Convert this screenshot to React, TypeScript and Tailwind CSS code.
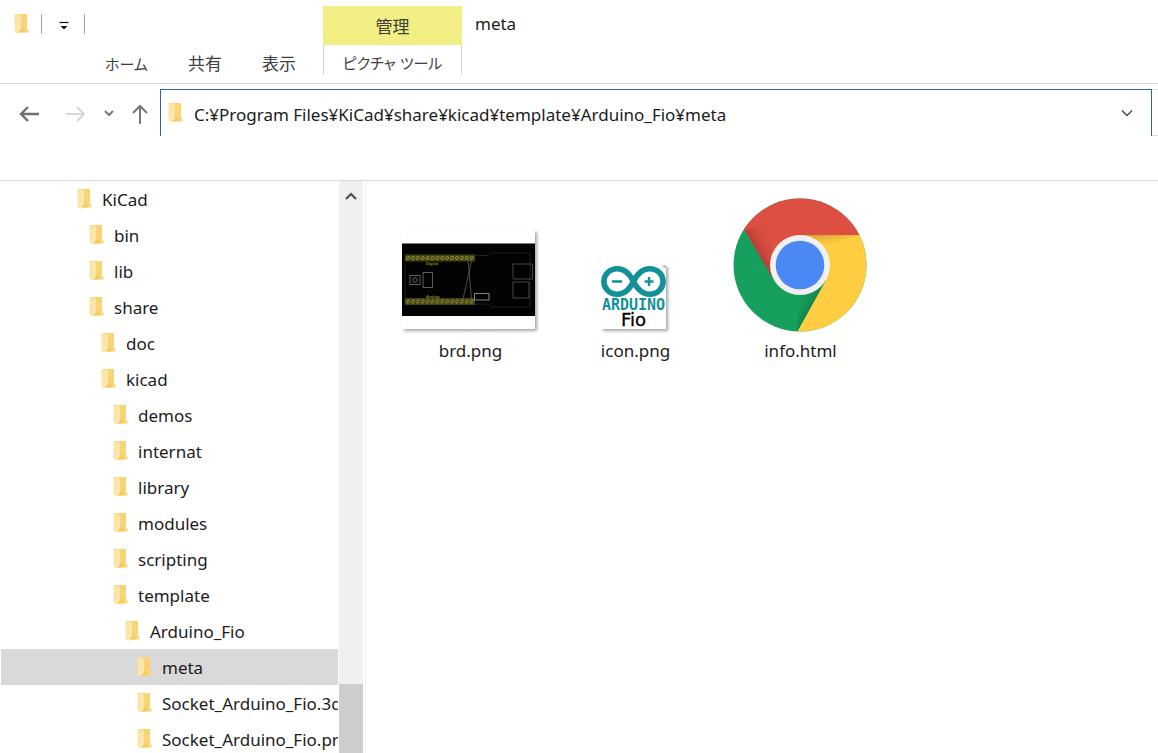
import { useState } from "react";

function Folder() {
  return (
    <svg width="16" height="22" viewBox="1 0 16 22" aria-hidden="true" className="shrink-0">
      <defs>
        <linearGradient id="flap" x1="0" y1="0" x2="1" y2="1">
          <stop offset="0" stopColor="#fbe49f" />
          <stop offset="1" stopColor="#fbe9b4" />
        </linearGradient>
      </defs>
      <path d="M6 1H14V16L15.500 17V19.500H5Z" fill="#fbd476" />
      <path d="M7 15L10 14L12 19.500H6Z" fill="#f3cb66" />
      <path d="M1.500 1H5L8 3V17L5 18.500V21L1.500 18.500Z" fill="url(#flap)" />
      <path d="M1.500 1H9L7.500 2.500Z" fill="#f6d88a" />
    </svg>
  );
}

type Node = { name: string; pad: string };

const nodes: Node[] = [
  { name: "KiCad", pad: "pl-[76px]" },
  { name: "bin", pad: "pl-[88px]" },
  { name: "lib", pad: "pl-[88px]" },
  { name: "share", pad: "pl-[88px]" },
  { name: "doc", pad: "pl-[100px]" },
  { name: "kicad", pad: "pl-[100px]" },
  { name: "demos", pad: "pl-[112px]" },
  { name: "internat", pad: "pl-[112px]" },
  { name: "library", pad: "pl-[112px]" },
  { name: "modules", pad: "pl-[112px]" },
  { name: "scripting", pad: "pl-[112px]" },
  { name: "template", pad: "pl-[112px]" },
  { name: "Arduino_Fio", pad: "pl-[124px]" },
  { name: "meta", pad: "pl-[136px]" },
  { name: "Socket_Arduino_Fio.3dshapes", pad: "pl-[136px]" },
  { name: "Socket_Arduino_Fio.pretty", pad: "pl-[136px]" },
];

const pins = Array.from({ length: 14 }, (_, i) => 6 + i * 4.9);

function BoardThumb() {
  return (
    <svg width="133" height="99" viewBox="0 0 133 99" aria-hidden="true" className="mr-1 mb-[3px] bg-white shadow-[2px_2px_3px_rgba(0,0,0,0.35)]">
      <rect y="13.500" width="133" height="72.500" fill="#020202" />
      <g fill="none" stroke="#3c3a26" strokeWidth=".8">
        <path d="M3 25.500H86L89 23H128V77H89L86 74H3Z" stroke="#29281c" />
        <path d="M111 34H130.500V49H111ZM111 52H127V68H111Z" stroke="#57564c" />
      </g>
      {[28, 71.5].map((y) => (
        <g key={y}>
          <rect x="3" y={y - 3.5} width="70" height="7" fill="#41430d" />
          {pins.map((x) => (
            <g key={x}>
              <circle cx={x} cy={y} r="1.600" fill="#202006" stroke="#8f8f3c" strokeWidth=".9" />
              <path d={`M${x - 1} ${y + 2}L${x + 1} ${y - 2}`} stroke="#b4b368" strokeWidth=".5" />
            </g>
          ))}
        </g>
      ))}
      <g fill="none" stroke="#77776f" strokeWidth=".8">
        <path d="M8 45.500H18V54.500H8ZM21 42.500H30.500V57.500H21Z" />
        <circle cx="13" cy="50" r="2.300" />
        <path d="M66 29L69.500 69M70 29L61 69" stroke="#605f5d" />
        <path d="M72.500 63.500H87V70H72.500Z" stroke="#aaa" />
      </g>
      <text x="24" y="35" fill="#85871f" className="font-['Liberation_Sans'] text-[4px] font-bold">Digital</text>
      <text x="24" y="68" fill="#85871f" className="font-['Liberation_Sans'] text-[4px] font-bold">Analog</text>
    </svg>
  );
}

function ArduinoThumb() {
  return (
    <svg width="65" height="64" viewBox="0 0 65 64" aria-hidden="true" className="mr-1 mb-[3px] bg-white shadow-[2px_2px_3px_rgba(0,0,0,0.35)]">
      <g fill="none" stroke="#129298">
        <path
          d="M32.500 16.500C28.500 8.500 24 3.800 16.500 3.800C8.500 3.800 2.900 9.500 2.900 16.500S8.500 29.200 16.500 29.200C24 29.200 28.500 24.500 32.500 16.500C36.500 8.500 41 3.800 48.500 3.800C56.500 3.800 62.100 9.500 62.100 16.500S56.500 29.200 48.500 29.200C41 29.200 36.500 24.500 32.500 16.500Z"
          strokeWidth="5.600"
        />
        <path d="M11 16.500H21M43.500 16.500H52.500M48 12V21" strokeWidth="2.400" />
      </g>
      <text x="32.500" y="45" textAnchor="middle" fill="#129298" className="font-['DejaVu_Sans_Mono'] text-[15px] font-bold">ARDUINO</text>
      <text x="32.500" y="61" textAnchor="middle" fill="#000" stroke="#000" strokeWidth=".3" className="font-['DejaVu_Sans'] text-[18px]">Fio</text>
      <text x="61" y="3" fill="#129298" className="font-['Liberation_Sans'] text-[3px]">TM</text>
    </svg>
  );
}

function ChromeLogo() {
  return (
    <svg width="134" height="134" viewBox="0 0 134 134" aria-hidden="true" className="mr-px">
      <defs>
        <clipPath id="disc"><circle cx="67" cy="67" r="66.500" /></clipPath>
        <linearGradient id="redShade" gradientUnits="userSpaceOnUse" x1="26" y1="57" x2="44" y2="47">
          <stop offset="0" stopColor="#a03228" stopOpacity=".6" />
          <stop offset="1" stopColor="#dd4f43" stopOpacity="0" />
        </linearGradient>
        <linearGradient id="yellowShade" gradientUnits="userSpaceOnUse" x1="95" y1="36" x2="97" y2="50">
          <stop offset="0" stopColor="#c8962a" stopOpacity=".7" />
          <stop offset="1" stopColor="#ffcd42" stopOpacity="0" />
        </linearGradient>
        <linearGradient id="greenShade" gradientUnits="userSpaceOnUse" x1="84" y1="98" x2="66" y2="88">
          <stop offset="0" stopColor="#0b7542" stopOpacity=".6" />
          <stop offset="1" stopColor="#17a05d" stopOpacity="0" />
        </linearGradient>
      </defs>
      <g clipPath="url(#disc)">
        <rect width="134" height="134" fill="#17a05d" />
        <path d="M67 37H134V134H64L93 82Z" fill="#ffcd42" />
        <path d="M0 17L12 33L41 82L67 67V37H134V0H0Z" fill="#dd4f43" />
        <path d="M12 33L41 82L52 60L28 25Z" fill="url(#redShade)" />
        <path d="M67 37H126L90 48Z" fill="url(#yellowShade)" />
        <path d="M93 82L64 134L67 96Z" fill="url(#greenShade)" />
      </g>
      <circle cx="67" cy="67" r="30" fill="#f1f1f3" />
      <circle cx="67" cy="67" r="24.300" fill="#4a89f4" />
    </svg>
  );
}

const files = [
  { name: "brd.png", icon: <BoardThumb /> },
  { name: "icon.png", icon: <ArduinoThumb /> },
  { name: "info.html", icon: <ChromeLogo /> },
];

export default function App() {
  const [selected, setSelected] = useState("meta");
  const [path, setPath] = useState("C:¥Program Files¥KiCad¥share¥kicad¥template¥Arduino_Fio¥meta");

  return (
    <div className="flex h-screen flex-col overflow-hidden bg-white font-['Noto_Sans','Noto_Sans_CJK_JP',sans-serif] text-[17px] leading-6 text-[#1c1c1c]">
      <header className="flex h-[84px] shrink-0 border-b border-[#d9d9d9] text-[#404040]">
        <div className="flex w-[323px] flex-col justify-between">
          <div className="flex h-12 items-center pl-[14px]">
            <Folder />
            <span className="ml-[11px] h-5 w-px bg-[#a0a0a0]" />
            <button aria-label="Customize toolbar" className="ml-4 flex h-6 w-3 items-center justify-center pt-1">
              <svg width="12" height="12" viewBox="0 0 12 12"><path d="M1.500 2.500H10.500" stroke="#111" strokeWidth="1.200" /><path d="M2.500 6H9.500L6 9.500Z" fill="#111" /></svg>
            </button>
            <span className="ml-[14px] h-5 w-px bg-[#a0a0a0]" />
          </div>
          <nav className="flex h-9 items-center gap-10 pb-[2px] pl-[105px] [font-feature-settings:'palt']">
            <button className="text-[15px] whitespace-nowrap">ホーム</button>
            <button className="whitespace-nowrap">共有</button>
            <button className="whitespace-nowrap">表示</button>
          </nav>
        </div>
        <div className="flex w-[139px] flex-col pt-[6px] [font-feature-settings:'palt']">
          <div className="flex h-[39px] items-center justify-center bg-[#f1ef83] pt-[3px]">管理</div>
          <button className="h-[30px] border-x border-[#d4d4d4] pt-[6px] text-[15px] whitespace-nowrap">ピクチャ ツール</button>
        </div>
        <h1 className="pt-3 pl-[13px] text-[#1c1c1c]">meta</h1>
      </header>

      <div className="flex h-[97px] shrink-0 items-start border-b border-[#dadada] pt-[5px]">
        <div className="flex h-[50px] w-40 shrink-0 items-center">
          <button aria-label="Back" className="ml-[19px]">
            <svg width="22" height="20" viewBox="0 0 22 20" fill="none" stroke="#6e6e6e" strokeWidth="2.400"><path d="M20 10H2M9 3L2 10L9 17" /></svg>
          </button>
          <button aria-label="Forward" className="ml-6">
            <svg width="22" height="20" viewBox="0 0 22 20" fill="none" stroke="#d6d6d6" strokeWidth="2"><path d="M1 10H19M12 3L19 10L12 17" /></svg>
          </button>
          <button aria-label="Recent locations" className="ml-4">
            <svg width="12" height="12" viewBox="0 0 12 12" fill="none" stroke="#777" strokeWidth="2"><path d="M2 3L6 7L10 3" /></svg>
          </button>
          <button aria-label="Up" className="ml-4">
            <svg width="18" height="22" viewBox="0 0 18 22" fill="none" stroke="#777" strokeWidth="2"><path d="M9 21V3M2 10L9 3L16 10" /></svg>
          </button>
        </div>
        <div className="flex h-[47px] min-w-0 flex-1 items-center border-x border-t border-[#2c6a8e] pb-px pl-[7px]">
          <Folder />
          <input aria-label="Address" value={path} onChange={(e) => setPath(e.target.value)} className="ml-[10px] min-w-0 flex-1 pt-1 outline-none" />
          <button aria-label="Address history" className="mr-[17px]">
            <svg width="14" height="12" viewBox="0 0 14 12" fill="none" stroke="#444" strokeWidth="1.300"><path d="M2 3.500L7 8.500L12 3.500" /></svg>
          </button>
        </div>
        <div className="h-[47px] w-[6px] border-y border-[#dadada]" />
      </div>

      <div className="flex min-h-0 flex-1">
        <ul className="w-[338px] shrink-0 overflow-hidden pl-px">
          {nodes.map((n) => (
            <li key={n.name} className={n.name === selected ? "bg-[#d9d9d9]" : ""}>
              <button onClick={() => setSelected(n.name)} className={`flex h-9 w-full items-center gap-[9px] text-left whitespace-nowrap ${n.pad}`}>
                <Folder />
                <span className="pt-px">{n.name}</span>
              </button>
            </li>
          ))}
        </ul>
        <div className="ml-px flex w-6 shrink-0 flex-col items-center bg-[#f0f0f0] pt-2">
          <button aria-label="Scroll up">
            <svg width="14" height="14" viewBox="0 0 14 14" fill="none" stroke="#505050" strokeWidth="2.200"><path d="M2 10L7 5L12 10" /></svg>
          </button>
          <span className="mt-auto h-[69px] w-full bg-[#cdcdcd]" />
        </div>
        <span className="ml-[2px] w-px bg-[#f0f0f0]" />
        <main className="flex min-w-0 flex-1 items-start pt-[17px] pl-[22px]">
          {files.map((f) => (
            <button key={f.name} className="flex w-[165px] flex-col items-center">
              <span className="flex h-[134px] items-end">{f.icon}</span>
              <span className="mt-[7px]">{f.name}</span>
            </button>
          ))}
        </main>
      </div>
    </div>
  );
}
